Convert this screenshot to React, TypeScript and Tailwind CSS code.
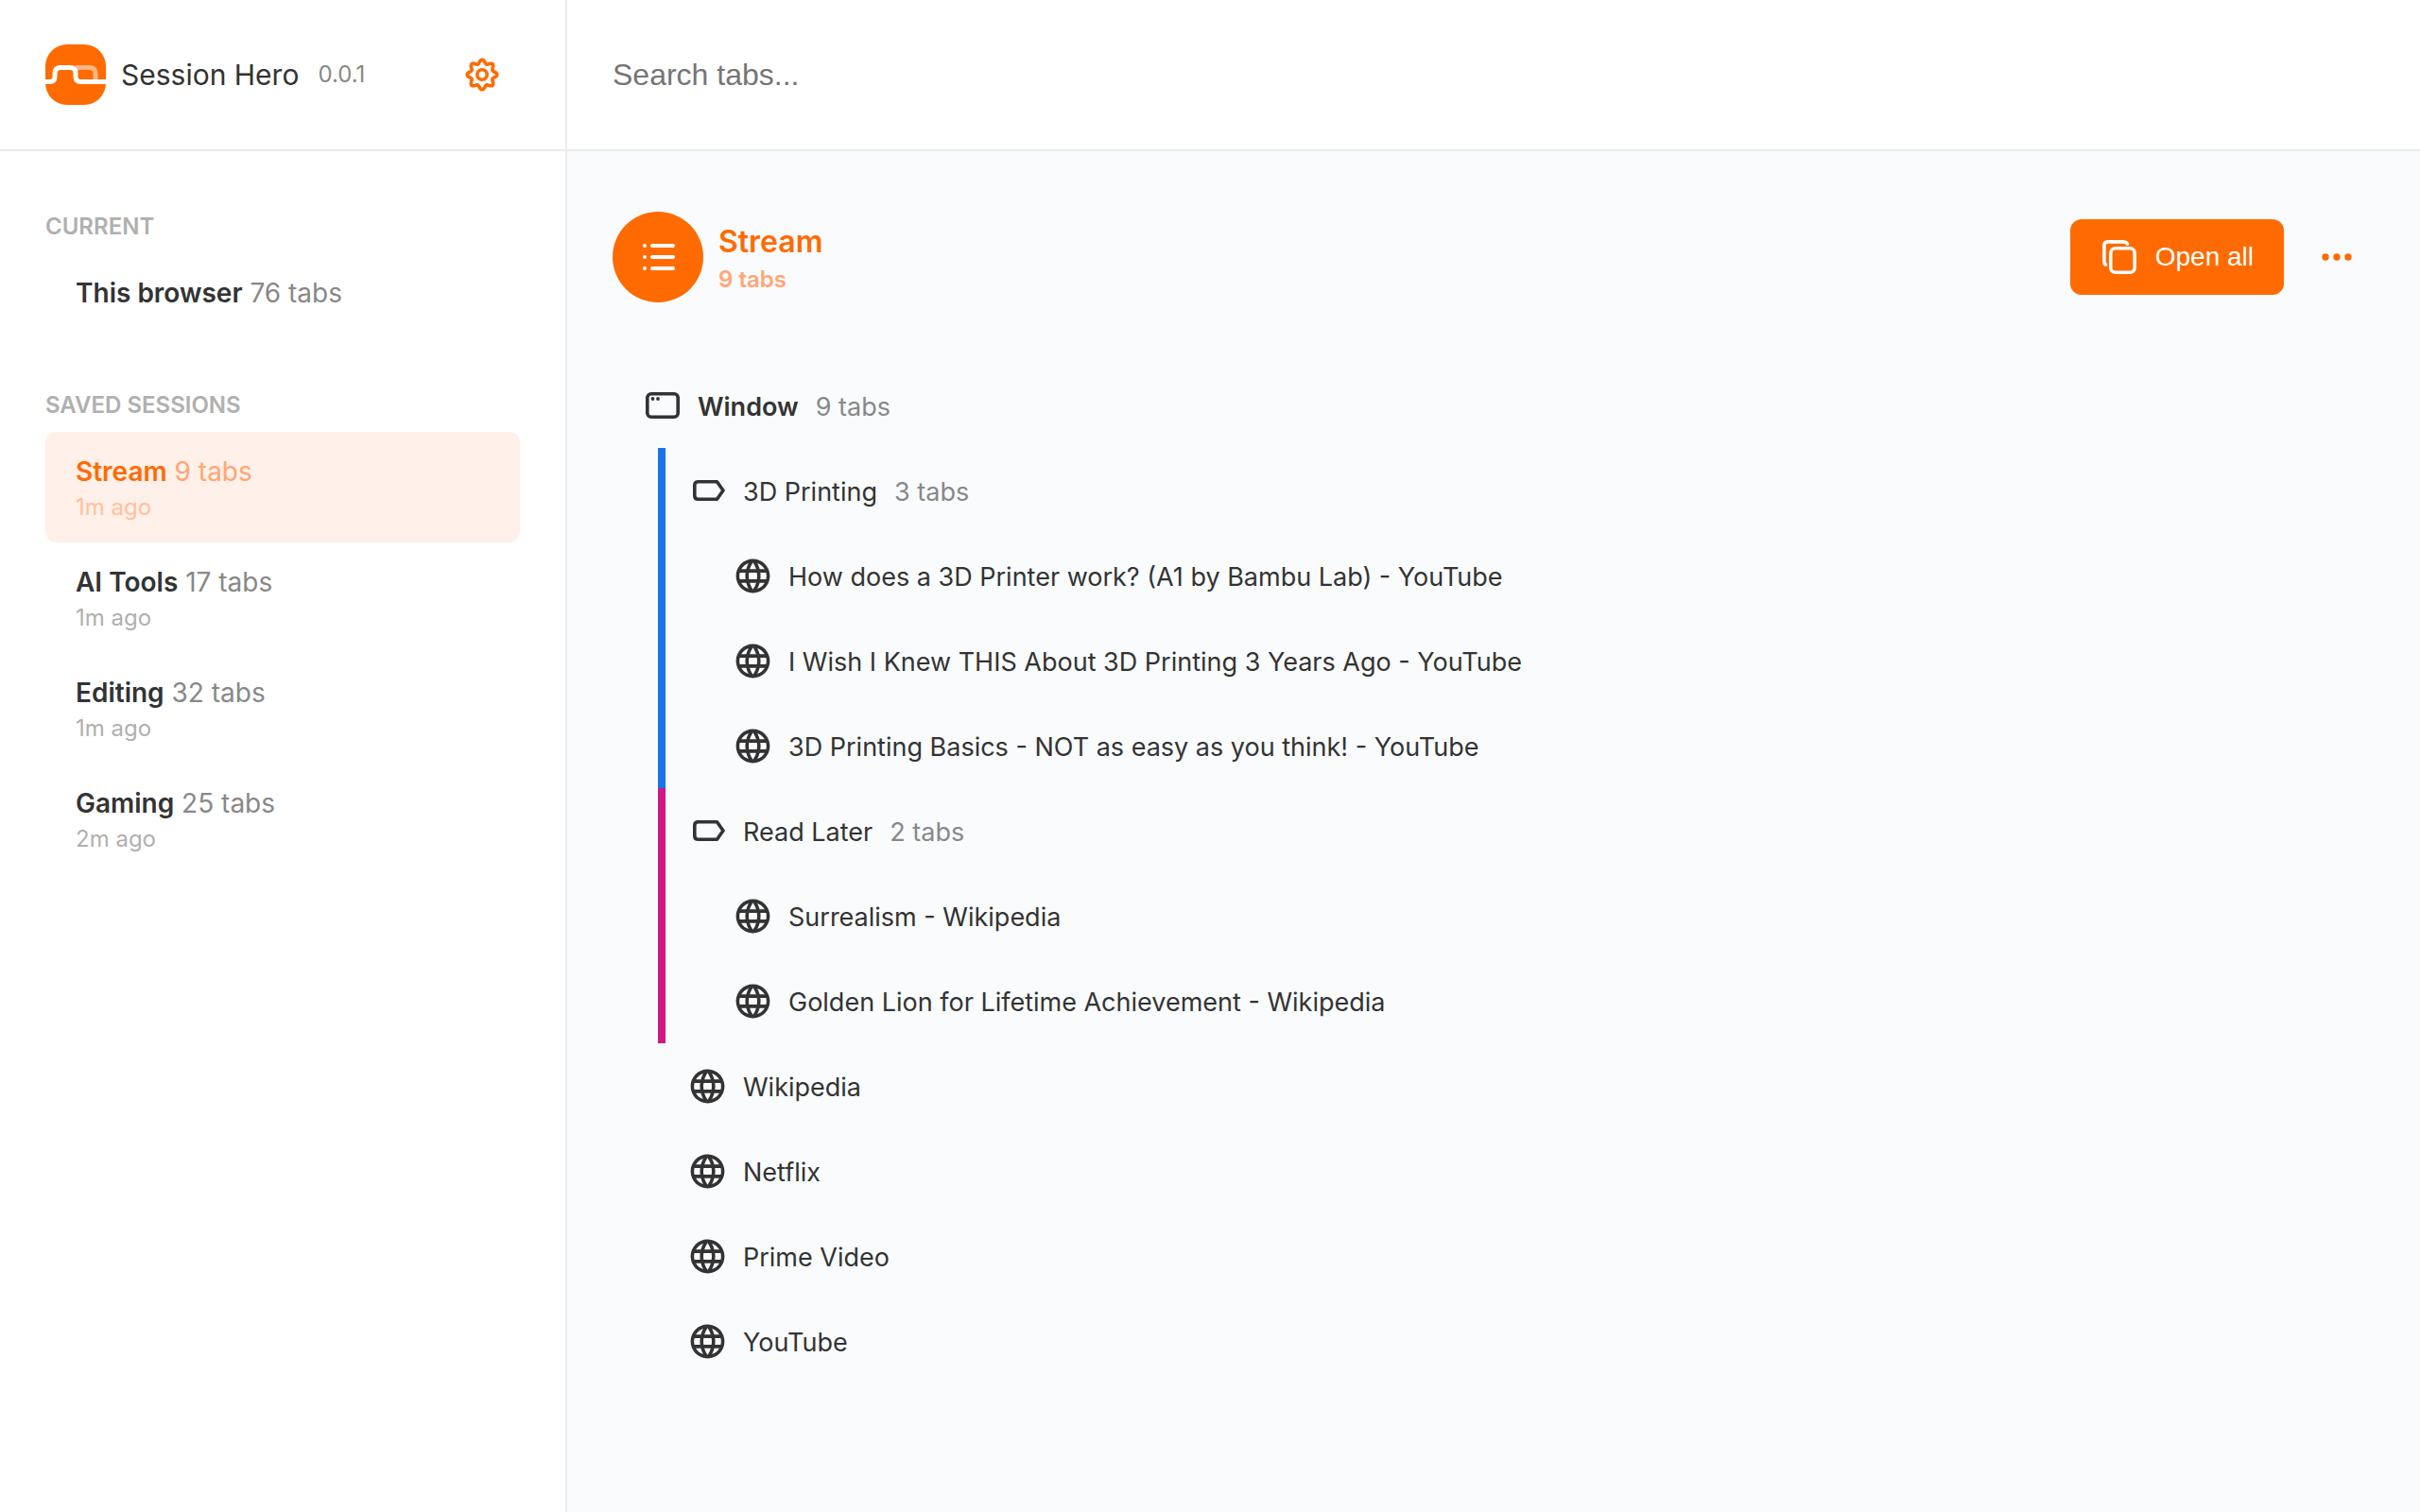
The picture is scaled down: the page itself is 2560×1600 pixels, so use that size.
import React from "react";
import { MdLanguage } from "react-icons/md";

const FONT = "font-['Inter',sans-serif]";

type Session = { name: string; tabs: number; age: string; active?: boolean };

const sessions: Session[] = [
  { name: "Stream", tabs: 9, age: "1m ago", active: true },
  { name: "AI Tools", tabs: 17, age: "1m ago" },
  { name: "Editing", tabs: 32, age: "1m ago" },
  { name: "Gaming", tabs: 25, age: "2m ago" },
];

const groups = [
  {
    name: "3D Printing",
    border: "border-[#1a73e8]",
    tabs: [
      "How does a 3D Printer work? (A1 by Bambu Lab) - YouTube",
      "I Wish I Knew THIS About 3D Printing 3 Years Ago - YouTube",
      "3D Printing Basics - NOT as easy as you think! - YouTube",
    ],
  },
  {
    name: "Read Later",
    border: "border-[#d01884]",
    tabs: ["Surrealism - Wikipedia", "Golden Lion for Lifetime Achievement - Wikipedia"],
  },
];

const looseTabs = ["Wikipedia", "Netflix", "Prime Video", "YouTube"];

function Logo() {
  return (
    <svg viewBox="0 0 64 64" className="size-16 shrink-0" aria-hidden="true">
      <rect width="64" height="64" rx="23" fill="#ff6b00" />
      <path d="M32 24.5H46.5Q53 24.5 53 31V39.5" fill="none" stroke="#ffb580" strokeWidth="5" />
      <path
        d="M0 39.5H4.5Q10 39.5 10 34V30.5Q10 24.5 16 24.5H26Q32 24.5 32 30V34Q32 39.5 37.5 39.5H64"
        fill="none"
        stroke="#fff"
        strokeWidth="5"
      />
    </svg>
  );
}

function GearIcon() {
  const points: string[] = [];
  for (let i = 0; i <= 160; i++) {
    const a = (i / 160) * Math.PI * 2;
    const r = 13.8 + 2 * Math.cos(8 * a);
    points.push(`${(20 + r * Math.cos(a)).toFixed(2)} ${(20 + r * Math.sin(a)).toFixed(2)}`);
  }
  return (
    <svg viewBox="0 0 40 40" className="size-10" fill="none" stroke="#ff6b00" strokeWidth="3.6" strokeLinejoin="round" aria-hidden="true">
      <path d={`M${points.join("L")}Z`} />
      <circle cx="20" cy="20" r="5.2" />
    </svg>
  );
}

function ListIcon() {
  return (
    <svg viewBox="0 0 36 30" className="h-[30px] w-9" stroke="#fff" strokeWidth="4" strokeLinecap="round" aria-hidden="true">
      <path d="M4 3h.01M4 15h.01M4 27h.01M12 3h22M12 15h22M12 27h22" />
    </svg>
  );
}

function CopyIcon() {
  return (
    <svg viewBox="0 0 36 36" className="size-9" fill="none" stroke="#fff" strokeWidth="3.6" strokeLinecap="round" aria-hidden="true">
      <rect x="8.8" y="8.8" width="25.4" height="25.4" rx="5" />
      <path d="M3.5 26Q1.9 25.5 1.9 22V6Q1.9 1.9 6 1.9H21Q25.5 1.9 26.5 4.2" />
    </svg>
  );
}

function WindowIcon() {
  return (
    <svg viewBox="0 0 36 28" className="h-7 w-9" fill="none" stroke="#333" strokeWidth="3.6" aria-hidden="true">
      <rect x="1.8" y="1.8" width="32.4" height="24.4" rx="4" />
      <circle cx="7.5" cy="7" r="1.9" fill="#333" stroke="none" />
      <circle cx="13" cy="7" r="1.9" fill="#333" stroke="none" />
    </svg>
  );
}

function GroupIcon() {
  return (
    <svg viewBox="0 0 34 22" className="h-[22px] w-[34px]" fill="none" stroke="#333" strokeWidth="3.6" strokeLinejoin="round" aria-hidden="true">
      <path d="M5.5 1.8H25.5L32 11L25.5 20.2H5.5Q1.8 20.2 1.8 16.5V5.5Q1.8 1.8 5.5 1.8Z" />
    </svg>
  );
}

function TabRow({ title, indent }: { title: string; indent: string }) {
  return (
    <li>
      <a href="#" className={`flex h-[90px] items-center gap-4 ${indent}`}>
        <MdLanguage className="size-[43px] shrink-0" aria-hidden="true" />
        <span className="pt-[3px]">{title}</span>
      </a>
    </li>
  );
}

export default function App() {
  return (
    <div className={`flex min-h-screen bg-[#f9fbfd] text-[27px] leading-9 text-[#333] ${FONT}`}>
      <aside className="w-[600px] shrink-0 border-r-2 border-[#ececec] bg-white">
        <header className="flex h-40 items-center border-b-2 border-[#ececec] px-12">
          <Logo />
          <h1 className="ml-4 text-[30px]">Session Hero</h1>
          <span className="ml-5 text-[24px] text-[#888]">0.0.1</span>
          <button type="button" aria-label="Settings" className="mr-5 ml-auto">
            <GearIcon />
          </button>
        </header>
        <nav className="px-12 pt-16 text-[28px]">
          <h2 className="text-[24px] leading-8 font-semibold text-[#b0b0b0]">CURRENT</h2>
          <a href="#" className="mt-3 block rounded-xl px-8 py-6">
            <strong className="font-semibold">This browser</strong> <span className="text-[#888]">76 tabs</span>
          </a>
          <h2 className="mt-[61px] text-[24px] leading-8 font-semibold text-[#b0b0b0]">SAVED SESSIONS</h2>
          <ul className="mt-3">
            {sessions.map((s) => (
              <li key={s.name}>
                <a
                  href="#"
                  aria-current={s.active ? "page" : undefined}
                  className={`block rounded-xl px-8 pt-6 pb-[21px] ${s.active ? "bg-[#fff0e9] text-[#ff6b00]" : ""}`}
                >
                  <strong className="font-semibold">{s.name}</strong>{" "}
                  <span className={s.active ? "text-[#ffa676]" : "text-[#888]"}>{s.tabs} tabs</span>
                  <span className={`mt-1 block text-[24px] leading-8 ${s.active ? "text-[#ffc09b]" : "text-[#b0b0b0]"}`}>{s.age}</span>
                </a>
              </li>
            ))}
          </ul>
        </nav>
      </aside>

      <main className="min-w-0 flex-1">
        <div className="flex h-40 items-center border-b-2 border-[#ececec] bg-white px-12">
          <input
            type="search"
            aria-label="Search tabs"
            placeholder="Search tabs..."
            className="w-full bg-transparent font-['Liberation_Sans',Arial,sans-serif] text-[32px] leading-10 outline-none placeholder:text-[#757575]"
          />
        </div>

        <div className="px-12 pt-16">
          <div className="flex items-center">
            <div className="flex size-24 items-center justify-center rounded-full bg-[#ff6b00]">
              <ListIcon />
            </div>
            <div className="ml-4 pt-[3px]">
              <h2 className="text-[32px] leading-10 font-semibold text-[#ff6b00]">Stream</h2>
              <p className="mt-1 text-[24px] leading-8 font-semibold text-[#ffa676]">9 tabs</p>
            </div>
            <button
              type="button"
              className="ml-auto flex h-20 items-center gap-5 rounded-xl bg-[#ff6b00] pr-8 pl-[34px] font-['Liberation_Sans',Arial,sans-serif] text-[28px] text-white"
            >
              <CopyIcon />
              Open all
            </button>
            <button type="button" aria-label="More actions" className="mr-2 ml-6 flex h-20 w-16 items-center justify-center">
              <svg viewBox="0 0 32 8" className="h-2 w-8" fill="#ff6b00" aria-hidden="true">
                <circle cx="4" cy="4" r="3.7" />
                <circle cx="16" cy="4" r="3.7" />
                <circle cx="28" cy="4" r="3.7" />
              </svg>
            </button>
          </div>

          <section className="mt-16">
            <div className="flex h-[90px] items-center pl-[35px]">
              <WindowIcon />
              <h3 className="ml-[19px] pt-[3px] font-semibold">Window</h3>
              <span className="ml-[18px] pt-[3px] text-[#888]">9 tabs</span>
            </div>
            <div className="pl-12">
              {groups.map((g) => (
                <div key={g.name} className={`border-l-8 ${g.border}`}>
                  <div className="flex h-[90px] items-center pl-[29px]">
                    <GroupIcon />
                    <h4 className="ml-[19px] pt-[3px]">{g.name}</h4>
                    <span className="ml-[18px] pt-[3px] text-[#888]">{g.tabs.length} tabs</span>
                  </div>
                  <ul>
                    {g.tabs.map((t) => (
                      <TabRow key={t} title={t} indent="pl-[71px]" />
                    ))}
                  </ul>
                </div>
              ))}
              <ul>
                {looseTabs.map((t) => (
                  <TabRow key={t} title={t} indent="pl-[31px]" />
                ))}
              </ul>
            </div>
          </section>
        </div>
      </main>
    </div>
  );
}
